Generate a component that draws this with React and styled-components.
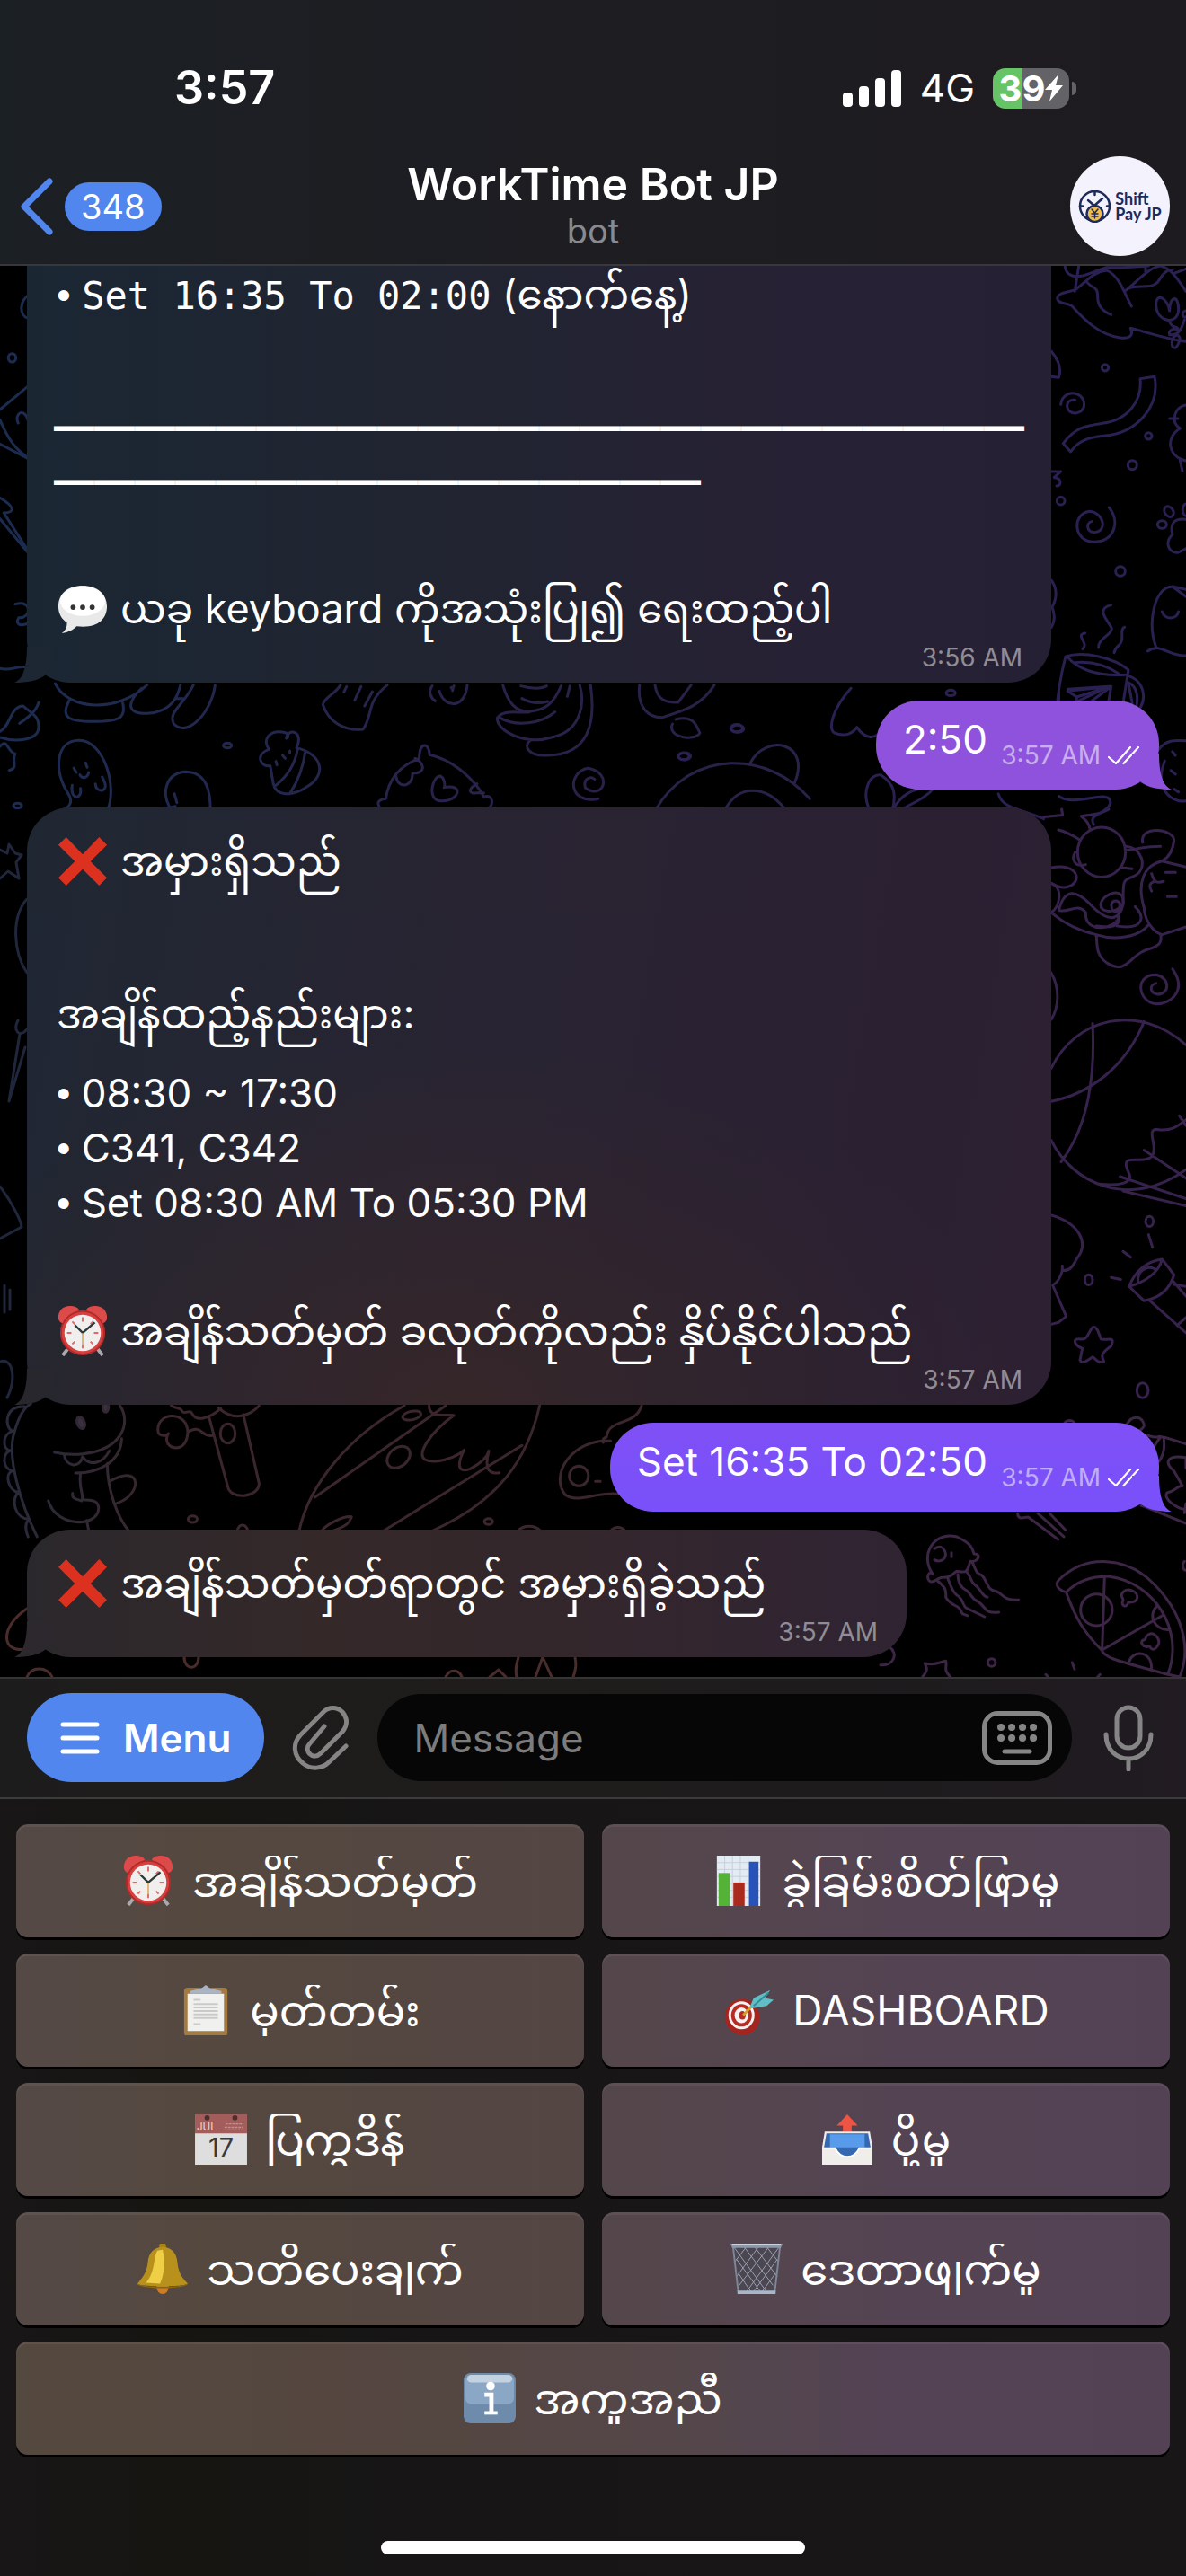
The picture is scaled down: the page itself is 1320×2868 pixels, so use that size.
import React from 'react';
import styled, { createGlobalStyle } from 'styled-components';

const sans = `Inter, "Noto Sans Myanmar", "Padauk", "Noto Sans", sans-serif`;

const GlobalStyle = createGlobalStyle`
  * { box-sizing: border-box; }
  body { margin: 0; background: #000; color: #fff; font-family: ${sans}; }
  button, input { font: inherit; color: inherit; border: 0; padding: 0; background: none; }
`;

const Screen = styled.div`
  display: flex;
  flex-direction: column;
  height: 100vh;
  overflow: hidden;
`;

/* ---------- header ---------- */

const Header = styled.header`
  flex: none;
  padding: 60px 18px 9px;
  background: linear-gradient(90deg, #1b2024, #1d1d22 45%, #1e1b20);
  border-bottom: 2px solid #38383b;
`;

const StatusBar = styled.div`
  display: flex;
  align-items: center;
  justify-content: space-between;
  height: 76px;
  padding: 0 104px 0 176px;
`;

const Clock = styled.time`
  font-size: 52px;
  font-weight: 600;
  line-height: 60px;
`;

const StatusIcons = styled.div`
  display: flex;
  align-items: center;
  gap: 20px;
  font-size: 44px;
  line-height: 60px;
`;

const Battery = styled.div`
  display: flex;
  align-items: center;
  gap: 3px;
`;

const BatteryBody = styled.div`
  display: flex;
  align-items: center;
  justify-content: center;
  width: 85px;
  height: 45px;
  border-radius: 14px;
  background: linear-gradient(90deg, #66c466 39%, #636367 39%);
  font-size: 40px;
  font-weight: 700;
  line-height: 45px;
`;

const BatteryNub = styled.div`
  width: 5px;
  height: 15px;
  border-radius: 0 5px 5px 0;
  background: #636367;
`;

const NavBar = styled.nav`
  display: grid;
  grid-template-columns: 1fr auto 1fr;
  align-items: center;
  margin-top: 38px;
`;

const BackButton = styled.button`
  justify-self: start;
  display: flex;
  align-items: center;
  gap: 12px;
  padding-left: 4px;
`;

const Unread = styled.span`
  padding: 0 18px;
  border-radius: 27px;
  background: #5086ee;
  font-size: 38px;
  line-height: 54px;
`;

const Heading = styled.div`
  text-align: center;
`;

const Title = styled.h1`
  margin: 0;
  font-size: 50px;
  font-weight: 600;
  line-height: 54px;
`;

const Subtitle = styled.p`
  margin: 0;
  font-size: 38px;
  line-height: 50px;
  color: #8a898d;
`;

const Avatar = styled.button`
  justify-self: end;
  display: flex;
  align-items: center;
  justify-content: center;
  gap: 4px;
  width: 111px;
  height: 111px;
  border-radius: 50%;
  background: #f4f3fd;
  color: #1c2a5c;
`;

const Brand = styled.span`
  font-family: Lato, sans-serif;
  font-size: 18px;
  font-weight: 700;
  line-height: 17px;
  text-align: left;
  white-space: pre;
`;

/* ---------- conversation ---------- */

const Chat = styled.main`
  position: relative;
  flex: 1 1 0;
  min-height: 0;
  display: flex;
  flex-direction: column;
  justify-content: flex-end;
  gap: 20px;
  padding: 0 30px 22px;
  overflow: hidden;
`;

const Wallpaper = styled.svg`
  position: absolute;
  inset: 0;
  width: 100%;
  height: 100%;
  fill: none;
  stroke-width: 3;
  stroke-linecap: round;
  stroke-linejoin: round;

  * { vector-effect: non-scaling-stroke; }
`;

const Bubble = styled.article`
  position: relative;
  display: grid;
  flex: none;
  align-self: ${(p) => (p.$out ? 'flex-end' : 'flex-start')};
  width: ${(p) => (p.$wide ? 'calc(100% - 120px)' : 'auto')};
  max-width: calc(100% - 120px);
  padding: ${(p) => (p.$out ? '13px 22px 26px 30px' : '8px 30px 24px')};
  border-radius: 48px;
  background: ${(p) => p.$fill};
  font-size: 44px;
  line-height: 60px;
`;

const Tail = styled.svg`
  position: absolute;
  bottom: 0;
  ${(p) => (p.$out ? 'right: -14px;' : 'left: -14px; transform: scaleX(-1);')}
  width: 44px;
  height: 40px;
  fill: ${(p) => p.$fill};
`;

const Body = styled.div`
  grid-area: 1 / 1;
  padding-right: ${(p) => p.$reserve || 0}px;
`;

const Line = styled.p`
  margin: 0;
  padding-left: 3px;
  min-height: 60px;
`;

const TallLine = styled(Line)`
  height: 110px;
  font-size: 45px;
  line-height: 104px;
  white-space: nowrap;
`;

const Bullet = styled.span`
  font-family: "Liberation Sans", Arial, sans-serif;
  white-space: pre;
`;

const Rule = styled.p`
  margin: 0;
  font-family: "Noto Sans CJK JP", sans-serif;
  font-size: 45px;
  line-height: 60px;
  word-break: break-all;
`;

const Code = styled.code`
  font-family: "DejaVu Sans Mono", monospace;
  font-size: 42px;
`;

const Meta = styled.span`
  grid-area: 1 / 1;
  place-self: end;
  display: flex;
  align-items: center;
  gap: 8px;
  margin: ${(p) => (p.$out ? '0 0 -8px' : '0 2px -16px')};
  font-size: 28px;
  line-height: 40px;
  color: ${(p) => (p.$out ? 'rgba(255,255,255,.55)' : '#918d94')};
`;

const Emoji = styled.svg`
  display: inline-block;
  flex: none;
  width: 58px;
  height: 56px;
  margin-right: ${(p) => p.$gap || 13}px;
  vertical-align: -12px;
`;

/* ---------- composer ---------- */

const Composer = styled.form`
  flex: none;
  display: flex;
  align-items: center;
  padding: 16px 30px 17px;
  border-top: 2px solid #363536;
  border-bottom: 2px solid #3d3c3d;
  background: linear-gradient(90deg, #1d1c1c, #1f1c1b 40%, #1d1b1c 70%, #211b22);
`;

const MenuButton = styled.button`
  display: flex;
  align-items: center;
  gap: 26px;
  height: 99px;
  padding: 0 37px;
  border-radius: 50px;
  background: #5086ee;
  font-size: 44px;
  font-weight: 600;
`;

const IconButton = styled.button`
  display: flex;
  flex: none;
  color: #858585;
  margin: ${(p) => p.$margin || 0};
`;

const Field = styled.label`
  flex: 1;
  min-width: 0;
  display: flex;
  align-items: center;
  height: 97px;
  padding: 0 22px 0 40px;
  border-radius: 49px;
  background: #060606;
`;

const Input = styled.input`
  flex: 1;
  min-width: 0;
  width: 100%;
  font-size: 44px;
  outline: none;
  &::placeholder { color: #7c7c7c; opacity: 1; }
`;

/* ---------- bot keyboard ---------- */

const Keyboard = styled.section`
  flex: none;
  padding: 28px 18px 24px;
  background: linear-gradient(90deg, #181616, #161512 15%, #171516 35%, #181617);
`;

const Keys = styled.div`
  display: grid;
  grid-template-columns: 1fr 1fr;
  gap: 18px 20px;
`;

const Key = styled.button`
  display: flex;
  align-items: center;
  justify-content: center;
  grid-column: ${(p) => (p.$tone === 'full' ? '1 / -1' : 'auto')};
  height: 126px;
  border-radius: 13px;
  background: ${(p) =>
    ({
      left: 'linear-gradient(90deg, #554946, #54483f 35%, #544644)',
      right: 'linear-gradient(90deg, #54474a, #544453 50%, #524253)',
      full: 'linear-gradient(90deg, #54493f, #544640 35%, #54474a 58%, #534354 75%, #524253)',
    })[p.$tone]};
  box-shadow: 0 3px 0 #000, inset 0 3px 0 rgba(255, 255, 255, 0.06);
  font-size: ${(p) => (p.$latin ? 46 : 48)}px;
`;

const KeyLabel = styled.span`
  display: flex;
  align-items: center;
  height: 57px;
  line-height: 57px;
  overflow: hidden;
  white-space: nowrap;
`;

const HomeBar = styled.div`
  width: 472px;
  max-width: 60%;
  height: 15px;
  margin: 96px auto 0;
  border-radius: 8px;
  background: #fff;
`;

/* ---------- drawings ---------- */

const emojiArt = {
  cross: (
    <path d="M11 1l19 20L49 1l9 9-19 19 19 19-9 9-19-19-19 19-9-9 19-19L2 10z" fill="#dd3120" />
  ),
  speech: (
    <>
      <path d="M30 2C13 2 2 11 2 26c0 9 4 15 10 19 0 5-2 9-6 12 8-1 13-4 17-8 24 3 35-8 35-23C58 11 46 2 30 2z" fill="#e9e9e9" />
      <ellipse cx="30" cy="20" rx="26" ry="17" fill="#fff" />
      <g fill="#333"><circle cx="19" cy="27" r="3" /><circle cx="30" cy="27" r="3" /><circle cx="41" cy="27" r="3" /></g>
    </>
  ),
  alarm: (
    <>
      <path d="M14 48L7 57M46 48l7 9" stroke="#a9a9ad" strokeWidth="4" />
      <path d="M2 15C1 5 8 0 15 0c6 0 10 2 11 5L8 20c-3 0-5-2-6-5zM58 15C59 5 52 0 45 0c-6 0-10 2-11 5l18 15c3 0 5-2 6-5z" fill="#dc4a4a" />
      <circle cx="30" cy="31" r="26" fill="#b22a2a" />
      <circle cx="30" cy="31" r="24" fill="#d84040" />
      <circle cx="30" cy="31" r="21" fill="#f1efee" />
      <path d="M30 13v5M30 44v5M12 31h5M43 31h5M18 18l3 3M42 18l-3 3M18 44l3-3M42 44l-3-3" stroke="#e06a6a" strokeWidth="2" />
      <path d="M21 22l9 9 14-12" fill="none" stroke="#2c3a3a" strokeWidth="2.5" />
      <path d="M30 31v13" stroke="#d9a54a" strokeWidth="1.5" />
    </>
  ),
  chart: (
    <>
      <path d="M5 0h50v58H5z" fill="#e3ebf3" />
      <path d="M5 8h50M5 16h50M5 24h50M5 32h50M5 40h50M5 48h50M14 0v58M23 0v58M32 0v58M41 0v58" stroke="#c5d0dc" strokeWidth="1" />
      <path d="M7 20h13v38H7z" fill="#54b336" />
      <path d="M24 31h13v27H24z" fill="#ab2a1e" />
      <path d="M42 7h11v51H42z" fill="#2753b8" />
    </>
  ),
  clipboard: (
    <>
      <rect x="5" y="3" width="50" height="56" rx="4" fill="#a37a3f" />
      <path d="M9 10h42v43H9z" fill="#f0f0ef" />
      <path d="M25 4l5-4 5 4 13 3v3H12V7z" fill="#a9b3c4" />
      <path d="M16 17h8M16 22h28M16 26h28M16 30h28M16 34h28M16 38h28M16 45h8" stroke="#cacaca" strokeWidth="2" />
    </>
  ),
  target: (
    <>
      <ellipse cx="23" cy="37" rx="20" ry="21" fill="#a52420" transform="rotate(-12 23 37)" />
      <ellipse cx="22" cy="35" rx="15" ry="16" fill="#f4f2f0" />
      <ellipse cx="22" cy="35" rx="12" ry="13" fill="#b82a24" />
      <ellipse cx="22" cy="35" rx="8" ry="9" fill="#f4f2f0" />
      <ellipse cx="23" cy="35" rx="4" ry="5" fill="#b82a24" />
      <path d="M24 35l10-11" stroke="#d3a024" strokeWidth="3" />
      <path d="M31 27l5-12L55 6l-6 9 10 2-8 7-17 3z" fill="#62bec6" />
      <path d="M36 24L53 9" stroke="#2f8d98" strokeWidth="2" />
    </>
  ),
  calendar: (
    <>
      <path d="M0 0h60v58H0z" fill="#dedede" />
      <path d="M0 0h60v22H0z" fill="#a35d5b" />
      <circle cx="14" cy="4" r="3" fill="#4a2f2f" /><circle cx="46" cy="4" r="3" fill="#4a2f2f" />
      <text x="2" y="19" fill="#efd5d4" fontSize="12" fontFamily="Inter">JUL</text>
      <path d="M35 11h21M34 15h21M33 18h21" stroke="#c98f8d" strokeWidth="1.5" strokeDasharray="3 1" />
      <text x="30" y="49" fill="#3a3a3c" fontSize="30" fontFamily="Inter" textAnchor="middle">17</text>
    </>
  ),
  outbox: (
    <>
      <path d="M30 0l12 13h-7v9H25v-9h-7z" fill="#ee5443" />
      <path d="M4 20h52l3 18v20H1V38z" fill="#efeeea" />
      <path d="M6 22h48l3 17H44c-3 6-8 10-14 10s-11-4-14-10H3z" fill="#3568b2" />
      <path d="M10 23h40v15H10z" fill="#589bea" />
      <path d="M2 39h14c3 6 8 10 14 10s11-4 14-10h14" fill="none" stroke="#fff" strokeWidth="2" />
    </>
  ),
  bell: (
    <>
      <circle cx="30" cy="3" r="4" fill="#a98312" />
      <ellipse cx="30" cy="50" rx="7" ry="8" fill="#cd7d26" />
      <path d="M30 4c-10 0-16 7-17 17-1 11-5 17-12 25-3 4 57 4 58 0-8-8-11-14-12-25C46 11 40 4 30 4z" fill="#b8911d" />
      <path d="M24 8c-5 8-2 24-13 37l16 1c5-10 6-26 3-39z" fill="#efcf45" />
      <path d="M1 46c8 5 50 5 58 0-2 7-56 7-58 0z" fill="#8c6412" />
    </>
  ),
  trash: (
    <>
      <path d="M3 4l6 52h42l6-52z" fill="#4b4650" />
      <path d="M4 4l38 52M16 4l33 44M28 4l26 34M42 4l14 18M7 18l28 38M9 34l15 22M56 4L18 56M44 4L10 48M32 4L7 38M18 4L4 22M54 18L26 56M52 34L36 56" stroke="#9ba4b5" strokeWidth="1" />
      <path d="M3 4l6 52M57 4l-6 52" stroke="#7d8798" strokeWidth="2" />
      <path d="M0 0h60l-2 5H2z" fill="#8e98a9" /><path d="M2 1h56" stroke="#dfe5ee" strokeWidth="1.5" />
      <path d="M8 54h44v4H8z" fill="#a8b6ca" />
    </>
  ),
  info: (
    <>
      <rect width="60" height="58" rx="8" fill="#6f8bab" />
      <rect x="2" y="2" width="56" height="34" rx="7" fill="#8ba7c6" />
      <rect x="4" y="2" width="52" height="9" rx="5" fill="#c3d2e0" />
      <circle cx="31" cy="15" r="5" fill="#fff" />
      <path d="M24 25h8v21" fill="none" stroke="#fff" strokeWidth="5" /><path d="M24 46h15" stroke="#fff" strokeWidth="4" />
    </>
  ),
};

const EmojiIcon = ({ name, gap }) => (
  <Emoji viewBox="0 0 60 58" $gap={gap} aria-hidden="true">{emojiArt[name]}</Emoji>
);

const Doodles = () => (
  <Wallpaper viewBox="0 295 1320 1571" preserveAspectRatio="xMinYMin slice" aria-hidden="true">
    <defs>
      <linearGradient id="cool" gradientUnits="userSpaceOnUse" x1="0" y1="0" x2="1000" y2="0">
        <stop offset="0" stopColor="#1c2c50" /><stop offset="1" stopColor="#2a2149" />
      </linearGradient>
      <linearGradient id="warm" gradientUnits="userSpaceOnUse" x1="0" y1="0" x2="400" y2="0">
        <stop offset="0" stopColor="#272a3b" /><stop offset="1" stopColor="#3a262c" />
      </linearGradient>
    </defs>

    <g transform="translate(1160 290) scale(.3333)" stroke="#2b2052">
      <path d="M75 10c2 35 25 45 60 38 30-8 55-22 80-28 40 2 80 0 140-5M122 15l-13 85M50 125c0-20 30-20 60-30 35-25 60-60 105-65 45 20 60 80 83 120M150 70c20 25 35 10 35 50 0 30 20 48 45 58M50 125c5 20 35 12 50 25 40 45 90 95 160 105 35 5 45-10 35-32 60 15 130 40 185 45M275 100c40-30 80-80 120-85 40 10 60 50 85 85M290 90c30-15 70 5 95-20 15-20 20-40 50-42M345 35v-20M440 40l40-15" />
      <path d="M425 165c-5-40-45-65-45-20 0 60 75 70 75 15 0-50-30-45-30 5M425 200c10 30 25 10 30 30-15-10-35 0-30 15 30 5 40-20 50-50M435 285c-10-30 20-55 25-25-10 35-20 30-25 25M480 165c-15 0-15 25 0 20M455 265h25" />
      <path d="M30 300c25 30 35 60 25 88l-25-3M62 478c5-50 75-50 78 0 0 35-55 40-57 5 0-15 12-22 27-20M327 392l48-7c20 100-60 190-170 198-50 5-85 15-110 53l-25-28c40-55 80-60 130-67 85-10 135-75 127-149z" />
      <circle cx="210" cy="355" r="11" /><circle cx="355" cy="583" r="11" /><circle cx="301" cy="680" r="15" /><circle cx="62" cy="800" r="13" /><circle cx="261" cy="1035" r="16" />
      <path d="M480 480c-30 5-40 30-38 50 0 10 10 22 18 28-50 30-40 95 20 108M425 525h28M460 665l8 35M30 702h32c-10 10-20 15-22 20 25 0 25 30 8 28M223 822c40 50 15 115-50 115-70 0-75-95-15-102 50 5 60 70 15 70-25-2-28-32-8-36" />
      <ellipse cx="423" cy="836" rx="14" ry="19" transform="rotate(-35 423 836)" /><ellipse cx="400" cy="879" rx="15" ry="13" /><ellipse cx="480" cy="830" rx="11" ry="20" />
      <path d="M480 862c-40-5-55 15-45 50-30 30-10 65 20 60l25-12M30 1065c20 25 20 60 3 90 10 25 8 50-3 68M480 1120l-45-34c-60 0-85 120-55 203M435 1086l45 10M400 1170c10 28 48 28 55 0M352 1302c40-30 75 20 128 15M230 1148c-60 15 0 60 2 80-5 25-45 30-44 62M275 1222c-15 5-5 30-10 45-5 20-20 15-25 40M143 1242c-35 5 15 35-8 53" />
      <path d="M50 1475c5-50 15-105 28-155 60-20 165 5 210 45-2 12 0 15-10 16-80 5-150-10-195-60M110 1340c60-5 105 10 145 37M288 1365l-18 110M288 1385c50 15 60 70 40 105M285 1405c35 15 35 50 30 80M85 1435l145-15-80 60M85 1435l30 20v20M115 1455l115-35-10 60" />
    </g>

    <g transform="translate(1160 900) scale(.3333 .4337)" stroke="#36224d">
      <path d="M0 20l68-5-3-15M222 0c-30 15-55 12-92 18 15 10 25 15 30 35M54 53c30 5 50 15 72 26" />
      <ellipse cx="198" cy="110" rx="80" ry="64" />
      <path d="M30 150c90-15 110 40 50 50-20 3-35-3-50-10M110 110c-15 20 0 40 35 32M265 150l35 3M280 105c35 0 45-10 115-10M280 95c60 5 70 60 30 75-40 15-40 5-40 70M335 85c-10-45 105-35 105-5-5 30-20 45-40 53-60 10-85 55-60 120M400 133l80 15M340 250c0 35 30 65 60 72l80-20M365 165c10 25 20 25 40 20M365 210c-15-20 5-25 15-25M412 162h33M418 224h30" />
      <path d="M30 190c40 10 30 60 0 75 30 20 80 45 150 57 60 15 140 8 175-25M55 260c20-60 60-50 100-20 60 50 100 50 115 5 10-50-70-30-75 0 0 20 40 20 60 10 20-25-40-30-20 5 20 10 40-10 20-22M60 260c30 5 60-20 85 5-5 60 110 40 110 10M180 300c50 5 75 0 75-15M250 300c90 10 95-25 60-50M180 322c5 20-5 50 35 72 70 35 80-25 140-35 40-8 45-20 40-38" />
      <path d="M435 410c50 55-5 90-55 90-60-5-75-75 0-75 50 8 45 50 5 50-30-5-25-25-5-28M30 420c30 40 25 90 0 120M30 665c80-130 290-170 450-60M30 750c130-20 250-90 310-205M168 550c10 150-20 270-105 355M30 850c70 110 260 180 450 75M190 962c60 5 120 0 98-30-20-35 0-32 30-32 50 0 55-10 55-30 0-20-20-50 10-48 45 5 65-5 97-25M260 943l220 57M270 980l210 38M340 875l140 72M458 787l22 25" />
      <circle cx="358" cy="1058" r="13" /><circle cx="155" cy="1208" r="13" /><circle cx="335" cy="1492" r="19" />
      <path d="M355 1092l13 32M270 1135l25 15M230 1202l32 5M290 1225c20-40 60-65 110-70l40 40c-15 40-50 60-100 67zM320 1215c-5-40 50-45 60-32M400 1155c-10 35-60 60-110 70M360 1262l120 82M435 1210l45 40M440 1220l40 5M450 1325l30-20M30 1042c90 20 130 70 85 112-10 15-20 32-48 30-5 15-15 30-32 38l45 80-25 15-25 5M67 1172v12" />
      <path d="M168 1330c15-5 20 15 28 30 20 5 50-10 34 18-40 20-30 30-24 40-20 5-25-5-38-12-20 10-35 20-42 8l8-30c-20-5-40-25-10-24 30 5 30-20 44-30z" />
    </g>

    <g transform="translate(0 750) scale(.574 .3333)" stroke="url(#cool)">
      <path d="M107 30c25 90 120 100 178 5M135 85c-20 60 0 72 45 72 50 0 65-10 58-62M275 45c-30 50-30 85 10 85 50-5 60-60 65-95M375 35c-20 70-50 90-38 130 30 50 75-50 80-130M340 80h15M0 190c20-15 20-85 45-85 15 25 30 30 30 70 0 50-50 50-75 35M75 93c-5 30-20 50-37 70" />
      <path d="M118 455c15-10 25-25 15-55-30-80-25-180 20-180 50 0 75 160 55 235M143 312l5 15M166 295l3 15M155 335c5 15 15 10 17-8M140 370c-5 50 20 50 16 10M185 365c0 30 25 30 18-5l-5-18M328 440c-15-50-5-110 30-115 45 0 50 70 50 130M338 398l5 30M300 455l40-15" />
      <circle cx="441" cy="237" r="8" /><circle cx="34" cy="438" r="8" />
      <path d="M660 35c-10 30-30 40-34 65 10 55 40 90 78 83 20-50 5-90 47-148M672 40l-5 18M700 40l-12 45M722 57l-15 48M524 305c-20 5-30-40-2-55-15-30 0-70 33-55 5 10 5 15 0 18 5-40 35-20 20 32 50 20 60 90 20 130-30 35-60 30-65-10zM577 250c-5 50-20 90-42 120M592 258c-5 60-15 100-30 140M562 255v7M548 270l5 10M535 290l2 12" />
      <path d="M838 38c-10 20 0 45 6 50M852 55c10 60 50 60 54-20M880 38c-5 20 0 20-5 5M975 35c10 60 25 90 52 90-25 5-50-10-63 20 0 50 60 90 105 65 60-20 65-120 55-175M1145 35c10 120 0 240-90 235-30 0-40-30-28-48M970 145c30 30 80 20 106-20M1012 80c20 20 40 15 50 10M1088 38c-15 60-30 80-60 85M1105 38l-5 35M1010 38c20 10 40 10 50 0M1240 35c-5 80 20 110 45 108 45-25 75-40 100-108M1270 35c5 50 20 60 45 58l25-58M1310 150c35-15 40 20 47 45-10 30-65 15-53-30" />
      <circle cx="1430" cy="181" r="12" /><circle cx="1327" cy="273" r="12" />
      <path d="M740 455c-10-25-10-35 8-40 5-60 25-110 65-135 0-60 20-50 20-12 50 20 90 90 105 140 20-10 20 30 5 47M805 280c20 20 20 50-5 50 0 50-30 50-32 10M853 422c-25-5-15-80 0-83 10 5 10 35 8 38 40-15 30 50-8 45M925 365c-20 20-15 35 0 30h13M1160 415c-60 20-60-90-20-102 50 15 30 110-5 65-5-30 10-40 18-28M1270 455c70-210 220-200 300-40M1405 455c25-90 80-90 120 0M1455 295c30-100 120-70 85 70" />
    </g>

    <g transform="translate(0 760) scale(.8418 .523)" stroke="#2b2052">
      <path d="M1125 10c-25 45-30 85-22 95 15 10 25 0 30-12 10 25 25 30 35 0M1400 5v36M1412 12l55-6-40 30M1492 0l5 42M1150 270c-12-40 0-80 15-75 18 20 20 40 15 75 10-30 25-50 55-48-10 20-25 30-45 48M1320 235c5 30 25 30 60 53M1400 240c20 25 70-20 68 15-5 25-30 20-22 45M1532 140c10-20 20-20 36-18M1540 165c-15 60 10 90 28 85M1550 145l4 8M1548 185l6 8M1553 225l5 6" />
      <circle cx="974" cy="95" r="8" /><circle cx="904" cy="155" r="7" /><circle cx="1257" cy="20" r="6" />
    </g>

    <g transform="translate(0 1560) scale(.4592 .3333)" stroke="url(#warm)">
      <path d="M90 450C50 340 15 180 35 100c8-40 20-80 40-95M60 15c-50-5-50 70-30 82-25 10-25 60-5 65-20 10-20 60 5 68-20 10-10 65 15 72-20 20-10 90 28 90-15 10-10 40-5 58M290 10c30 60 5 150-90 163-30 5-50 0-68-5M155 175c5 45 40 45 45 8 20 35 50 20 65-20M183 237c60 0 110-40 112-115M195 240c-5 50 10 70 3 90-15-5-25-10-22-25M117 330c20 90 120 90 122 25 0-20-10-30-35-28M210 395l5 35M260 205c0 90 25 180 52 225M268 263c80-60 75 50 15 75" />
      <path d="M415 12c10 10 20 5 25 15 5 20 20-5 25 10 10 30 40 20 70-15M530 20c40 50 80 20 98-8M507 52l45 230c5 45 75 40 76-10L590 42M515 112c-30 5-25-40-60-12 0-70-75-70-72-5 0 20 20 20 25 10-10 25 0 48 20 48 15-2 25-20 27-50M980 12C850 110 750 270 725 430M1308 12c-30 180-100 320-260 418M763 318l317-306M930 430l335-285M1040 12c0 40 30 30 60 32-60 60-90 130-70 148 20 15 70 0 95-32-15 40-20 80 15 63 20-15 40-35 45-60-10 50-5 80 25 73M780 430c10-20 50-50 72-47-5 20-10 30-45 47" />
      <ellipse cx="552" cy="105" rx="18" ry="32" /><ellipse cx="998" cy="45" rx="23" ry="14" transform="rotate(-20 998 45)" /><ellipse cx="966" cy="184" rx="25" ry="38" transform="rotate(25 966 184)" />
      <circle cx="467" cy="391" r="11" /><circle cx="1184" cy="399" r="10" />
      <path d="M575 430c5-25 20-25 26 0M1255 430c15-20 40-20 55 0M1480 430c10-15 25-15 35 0M1555 12c-15 70-80 40-85 105-10 5-10 10-8 18M1480 130c-90-10-150 110-110 180 30 30 70-10 130-3M1443 265h12" />
      <ellipse cx="1403" cy="247" rx="23" ry="33" />
      <ellipse cx="196" cy="69" rx="9" ry="20" fill="#37303d" transform="rotate(-12 196 69)" /><ellipse cx="256" cy="18" rx="7" ry="16" fill="#37303d" />
    </g>

    <g transform="translate(980 1560) scale(.3333)" stroke="#3c2545">
      <path d="M610 80c5-25 40-25 40 0M820 80c20-45 60-30 60 0-5 10-10 12-15 15M890 110c10 5 30 10 40 5l15 3c5 30 0 60-15 80M950 118l70 22M910 155c10-20 20-30 25-38M1020 185c-70-10-70 20-40 45l28 50M1008 280c-20 0-25 20-50 22-20 20 40 60 60 55M1020 340l-5 30M870 345l150 60M1020 190v30M458 372c0 20 15 15 35 12l100 75M525 372l87 78M565 372l52 55" />
      <path d="M175 575c-45-60 0-145 80-125 40 20 50 30 57 57 30 0 10 30-12 25-5 10-5 25-15 33-10 5-20 0-30 0-15 10-25 20-35 20-15 0-20 0-35 10-30 20-35-25-15-25M180 490c30-25 55 30 20 40-10 3-15 0-20-3M237 503v14M190 597c25 20 30 30 28 55 20 35 45 20 55 55l18 7M225 590c10 25 15 45 30 55 20 10 20 35 30 42l62 30M258 575c0 30 10 45 30 55 15 10 15 25 30 32 40 20 20 45 77 40M285 565c15 10 15 35 30 45 20 15 25 40 42 42M308 538c10 20 10 35 30 40 20 20 15 50 50 55 25 10 20 30 73 28" />
      <path d="M620 635c-35-10-35-30-25-40 90-90 230-80 320 15 90 90 125 210 85 305-10 5-30-5-40-5C820 870 750 860 738 828 680 770 650 720 620 635c40-40 90-55 145-52 150 20 250 180 195 325M748 583l-8 245 205-117M830 868c10-40 75-40 75 20M925 680c-35 30-10 85 40 80" />
      <circle cx="721" cy="694" r="53" />
      <path d="M807 640c10-25 55-10 50 15-3 15-20 15-30 15-5 20-25 10-18-5 5-10-10-15-2-25zM890 780c20-20 45 10 38 30-15 25-25 15-30 5-20 10-35-15-20-20 10 0 5-10 12-15zM140 918c20-25 15-30 8-45 30 5 35 0 70-8 5 25-10 25 15 53M30 818c30 20 15 65-30 60M640 870l8 22M552 910l8 8M733 910l-8 8M1015 532c-10 10-5 30 5 30" />
      <circle cx="371" cy="870" r="13" />
    </g>

    <g transform="translate(0 280) scale(.8418 .3333)" stroke="#1c2c50">
      <ellipse cx="16" cy="352" rx="5" ry="14" />
      <path d="M40 140c-15 20-15 70-3 80M0 525l38-80M38 570c-5-60-20-30-14 0M0 560c10 60 20 100 40 130M0 640l38 50M0 820c20 30 20 50 5 50M5 870l33 130M0 890l36 110M20 1175c25-15 20 50 5 45-5 20 0 30 12 20M0 1390c15 10 20-10 36-5M0 1650c10-30 10 20 20 25-5 20 5 50-8 55" />
    </g>

    <g stroke="#20263b">
      <path d="M0 945l8 4 2-10 7 10 7 2-6 8 3 18-12-8-9 8M30 1000c-18 20-15 60 0 82M30 1145c-8 10-16 2-10-10M22 1150l-12 75 18-60M0 1320c15 20 24 40 24 45l-24 13M11 1435v22M5 1430v30M0 1515c15-5 18 20 8 40" />
      <path d="M30 1790c-30 20-30 50 0 45M30 1866c5-12 22-12 28 0M205 1844c0 15 16 15 16 0M496 1866c5-10 15-8 18 0M545 1866l10-8 8 8M575 1866c-2-8 0-15 2-22M640 1844c2 10 0 16-2 22M596 1866l8-22 10 22" stroke="#4a2c2b" />
    </g>
  </Wallpaper>
);

const BackIcon = () => (
  <svg width="38" height="64" viewBox="0 0 38 64" fill="none" stroke="#5086ee" strokeWidth="7" strokeLinecap="round" strokeLinejoin="round" aria-hidden="true">
    <path d="M33 4L5 32l28 28" />
  </svg>
);

const SignalIcon = () => (
  <svg width="66" height="42" viewBox="0 0 66 42" fill="#fff" aria-hidden="true">
    <rect y="26" width="11" height="16" rx="4" /><rect x="18" y="19" width="11" height="23" rx="4" />
    <rect x="36" y="10" width="11" height="32" rx="4" /><rect x="54" y="1" width="11" height="41" rx="4" />
  </svg>
);

const BoltIcon = () => (
  <svg width="20" height="30" viewBox="0 0 20 30" fill="#fff" aria-hidden="true">
    <path d="M15 0L0 17h8L5 30l15-18h-8z" />
  </svg>
);

const LogoMark = () => (
  <svg width="37" height="37" viewBox="0 0 37 37" fill="none" stroke="#1c2a5c" strokeWidth="2.5" strokeLinecap="round" aria-hidden="true">
    <circle cx="18.500" cy="18.500" r="16.500" />
    <path d="M18.500 2v4M2 18.500h3M32 18.500h3M11 12l7 6 9-8" />
    <circle cx="18.500" cy="27" r="9" fill="#f0bc50" />
    <path d="M15 22l3.500 4 3.500-4M18.500 26v6M15 27h7M15 30h7" strokeWidth="1.5" />
  </svg>
);

const ChecksIcon = () => (
  <svg width="35" height="21" viewBox="0 0 35 21" fill="none" stroke="#fff" strokeWidth="2.200" strokeLinecap="round" strokeLinejoin="round" aria-hidden="true">
    <path d="M1 12l8 7L25 1M17.500 19L34 1" />
  </svg>
);

const BurgerIcon = () => (
  <svg width="44" height="36" viewBox="0 0 44 36" stroke="#fff" strokeWidth="5" strokeLinecap="round" aria-hidden="true">
    <path d="M3 3h38M3 18h38M3 33h38" />
  </svg>
);

const ClipIcon = () => (
  <svg width="64" height="72" viewBox="0 0 64 72" fill="none" stroke="currentColor" strokeWidth="5" strokeLinecap="round" strokeLinejoin="round" aria-hidden="true">
    <path d="M60 45L41 63C34 70 21 72 12 64 1 55 1 42 9 33L35 7c6-6 15-6 21 0 6 7 6 15 0 22L32 53c-4 4-9 4-12 1-4-4-3-9 0-12l16-19" />
  </svg>
);

const KeyboardIcon = () => (
  <svg width="78" height="60" viewBox="0 0 78 60" fill="none" stroke="currentColor" strokeWidth="5" strokeLinecap="round" aria-hidden="true">
    <rect x="2.500" y="2.500" width="73" height="55" rx="15" />
    <path d="M21 18h.1M33 18h.1M45 18h.1M57 18h.1M21 30h.1M33 30h.1M45 30h.1M57 30h.1" strokeWidth="8" />
    <path d="M25 45h28" />
  </svg>
);

const MicIcon = () => (
  <svg width="56" height="74" viewBox="0 0 56 74" fill="none" stroke="currentColor" strokeWidth="5" strokeLinecap="round" aria-hidden="true">
    <rect x="15" y="3" width="26" height="45" rx="13" />
    <path d="M3 33c0 36 50 36 50 0M28 61v11" />
  </svg>
);

const TailShape = ({ out, fill }) => (
  <Tail viewBox="0 0 44 40" $out={out} $fill={fill} aria-hidden="true">
    <path d="M30 0c0 22 4 36 14 40-14 0-26-2-34-8L0 20V0z" />
  </Tail>
);

const Message = ({ out, wide, fill, tail, time, reserve, children }) => (
  <Bubble $out={out} $wide={wide} $fill={fill}>
    <TailShape out={out} fill={tail} />
    <Body $reserve={reserve}>{children}</Body>
    <Meta $out={out}>
      {time}
      {out && <ChecksIcon />}
    </Meta>
  </Bubble>
);

const keys = [
  ['alarm', 'အချိန်သတ်မှတ်', 'left'],
  ['chart', 'ခွဲခြမ်းစိတ်ဖြာမှု', 'right'],
  ['clipboard', 'မှတ်တမ်း', 'left'],
  ['target', 'DASHBOARD', 'right'],
  ['calendar', 'ပြက္ခဒိန်', 'left'],
  ['outbox', 'ပို့မှု', 'right'],
  ['bell', 'သတိပေးချက်', 'left'],
  ['trash', 'ဒေတာဖျက်မှု', 'right'],
  ['info', 'အကူအညီ', 'full'],
];

export default function App() {
  return (
    <Screen>
      <GlobalStyle />
      <Header>
        <StatusBar>
          <Clock>3:57</Clock>
          <StatusIcons>
            <SignalIcon />
            <span>4G</span>
            <Battery>
              <BatteryBody>39<BoltIcon /></BatteryBody>
              <BatteryNub />
            </Battery>
          </StatusIcons>
        </StatusBar>
        <NavBar>
          <BackButton type="button" aria-label="Back">
            <BackIcon />
            <Unread>348</Unread>
          </BackButton>
          <Heading>
            <Title>WorkTime Bot JP</Title>
            <Subtitle>bot</Subtitle>
          </Heading>
          <Avatar type="button">
            <LogoMark />
            <Brand>{'Shift\nPay JP'}</Brand>
          </Avatar>
        </NavBar>
      </Header>

      <Chat>
        <Doodles />
        <Message wide fill="linear-gradient(90deg, #1a2733, #212431 40%, #262134 75%, #262034)" tail="#1c2733" time="3:56 AM">
          <Line />
          <TallLine><Bullet>• </Bullet><Code>Set 16:35 To 02:00</Code> (နောက်နေ့)</TallLine>
          <Line />
          <Rule>{'━'.repeat(40)}</Rule>
          <Line />
          <TallLine><EmojiIcon name="speech" />ယခု keyboard ကိုအသုံးပြု၍ ရေးထည့်ပါ</TallLine>
        </Message>

        <Message out fill="#8e52dc" tail="#8e52dc" time="3:57 AM" reserve={169}>2:50</Message>

        <Message
          wide
          fill="radial-gradient(ellipse 55% 60% at 42% 100%, #352629, rgba(53,38,41,0)), linear-gradient(100deg, #1f2733, #282432 40%, #2a2032 80%, #2d2033)"
          tail="#28272e"
          time="3:57 AM"
        >
          <TallLine><EmojiIcon name="cross" />အမှားရှိသည်</TallLine>
          <Line />
          <TallLine>အချိန်ထည့်နည်းများ:</TallLine>
          <Line><Bullet>• </Bullet>08:30 ~ 17:30</Line>
          <Line><Bullet>• </Bullet>C341, C342</Line>
          <Line><Bullet>• </Bullet>Set 08:30 AM To 05:30 PM</Line>
          <Line />
          <TallLine><EmojiIcon name="alarm" />အချိန်သတ်မှတ် ခလုတ်ကိုလည်း နှိပ်နိုင်ပါသည်</TallLine>
        </Message>

        <Message out fill="linear-gradient(#7f50f6, #7950fa)" tail="#7950fa" time="3:57 AM" reserve={169}>Set 16:35 To 02:50</Message>

        <Message fill="linear-gradient(90deg, #2b282d, #352829 35%, #33262c 65%, #302434)" tail="#2c282d" time="3:57 AM" reserve={127}>
          <TallLine><EmojiIcon name="cross" />အချိန်သတ်မှတ်ရာတွင် အမှားရှိခဲ့သည်</TallLine>
        </Message>
      </Chat>

      <Composer onSubmit={(e) => e.preventDefault()}>
        <MenuButton type="button"><BurgerIcon />Menu</MenuButton>
        <IconButton type="button" aria-label="Attach" $margin="0 31px"><ClipIcon /></IconButton>
        <Field>
          <Input type="text" placeholder="Message" aria-label="Message" />
          <IconButton type="button" aria-label="Bot keyboard"><KeyboardIcon /></IconButton>
        </Field>
        <IconButton type="button" aria-label="Record voice" $margin="0 6px 0 35px"><MicIcon /></IconButton>
      </Composer>

      <Keyboard>
        <Keys>
          {keys.map(([icon, label, tone]) => (
            <Key type="button" key={label} $tone={tone} $latin={label === 'DASHBOARD'}>
              <KeyLabel><EmojiIcon name={icon} gap={20} />{label}</KeyLabel>
            </Key>
          ))}
        </Keys>
        <HomeBar />
      </Keyboard>
    </Screen>
  );
}
